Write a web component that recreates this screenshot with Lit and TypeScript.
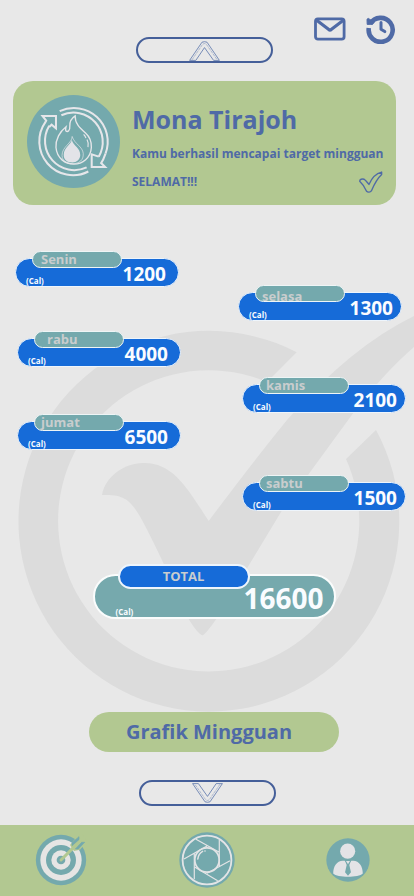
import { LitElement, html, css, svg } from "lit";
import { customElement, property } from "lit/decorators.js";
import { classMap } from "lit/directives/class-map.js";

interface Day {
  name: string;
  calories: number;
  label?: "low" | "mid" | "wide";
}

const LEFT: Day[] = [
  { name: "Senin", calories: 1200, label: "mid" },
  { name: "rabu", calories: 4000, label: "wide" },
  { name: "jumat", calories: 6500 },
];

const RIGHT: Day[] = [
  { name: "selasa", calories: 1300, label: "low" },
  { name: "kamis", calories: 2100 },
  { name: "sabtu", calories: 1500 },
];

@customElement("day-card")
export class DayCard extends LitElement {
  @property({ attribute: false }) day!: Day;

  static styles = css`
    :host {
      display: flex;
      flex-direction: column;
      width: 164px;
      color: #fafcff;
    }
    .tab {
      box-sizing: border-box;
      position: relative;
      z-index: 1;
      width: 90px;
      height: 17px;
      margin: 0 0 -10px 17px;
      padding: 0 6px;
      border: 1px solid #eef5f6;
      border-radius: 9px;
      background: #74a9ad;
      color: #c9cdce;
      font-size: 13px;
      font-weight: 700;
      line-height: 15px;
    }
    .mid {
      padding-left: 8px;
    }
    .wide {
      padding-left: 12px;
    }
    .low {
      line-height: 20px;
    }
    .body {
      box-sizing: border-box;
      display: flex;
      justify-content: space-between;
      align-items: flex-end;
      height: 29px;
      padding: 0 var(--value-inset, 12px) 0 10px;
      border: 1px solid #eef5fc;
      border-radius: 15px;
      background: #166bd8;
    }
    .unit {
      font-size: 8px;
      font-weight: 700;
      line-height: 11px;
    }
    .value {
      font-size: 19px;
      font-weight: 700;
      line-height: 23px;
    }
  `;

  render() {
    const { name, calories, label } = this.day;
    return html`
      <div class=${classMap({ tab: true, [label ?? "plain"]: true })}>${name}</div>
      <div class="body">
        <span class="unit">(Cal)</span>
        <span class="value">${calories}</span>
      </div>
    `;
  }
}

const mailIcon = svg`
  <svg class="mail" viewBox="0 0 32 24" fill="none" stroke="#4f6aa6" stroke-width="2.8" stroke-linejoin="round" stroke-linecap="round" aria-hidden="true">
    <rect x="1.5" y="1.8" width="28.6" height="20.4" rx="2.4"/>
    <path d="M3 3.6 14.8 12.6Q16 13.4 17.2 12.6L29 3.6" stroke-width="3.2"/>
  </svg>`;

const historyIcon = svg`
  <svg class="history" viewBox="0 0 30 30" fill="none" stroke="#4f6aa6" aria-hidden="true">
    <path d="M4.3 9.8A12 12 0 1 1 2.8 14" stroke-width="4.6"/>
    <path d="M1 5.2 2.4 4.4 8.2 8.4 6.4 10.2 1.2 10.4Z" fill="#4f6aa6" stroke-width="1"/>
    <path d="M15 8.6V15.2L18.8 17.6" stroke-width="3" stroke-linecap="round" stroke-linejoin="round"/>
  </svg>`;

const chevron = svg`
  <svg class="chevron" viewBox="0 0 31 20" fill="none" stroke="#5b75ab" aria-hidden="true">
    <path d="M.6 19.4 13 1.2Q15.5 .2 18 1.2L30.4 19.4H24.6L15.5 6.6 6.8 19.4Z" stroke-width=".8"/>
    <path d="M3 18.8 13.6 3.4Q15.5 1.6 17.4 3.4L28.2 18.8" stroke-width=".6" stroke-dasharray="3 .8" opacity=".7"/>
  </svg>`;

const flameIcon = svg`
  <svg class="flame" viewBox="51 57 276 276" fill="none" stroke="#e6e6ea" stroke-linejoin="miter" aria-hidden="true">
    <circle cx="189" cy="195" r="138" fill="#74a9ad" stroke="none"/>
    <path d="M148 105A100 100 0 0 1 284 231" stroke-width="6"/>
    <path d="M153 117A87 87 0 0 1 264 240" stroke-width="6"/>
    <path d="M264 240 243 233V271H283L271 259Q278 249 284 231" stroke-width="6"/>
    <path d="M233 284A100 100 0 0 1 106 137" stroke-width="6"/>
    <path d="M228 272A87 87 0 0 1 117 148" stroke-width="6"/>
    <path d="M106 137 108 133 97 119H137V156L124 145 117 152" stroke-width="6"/>
    <path d="M194 119C186 124 177 135 178 150C179 162 172 169 166 163C165 158 166 155 167 151C149 165 135 189 137 213C140 245 164 262 190 262C216 262 240 244 242 213C243 198 236 180 224 169C208 155 193 142 194 119Z" stroke-width="4"/>
    <path d="M185 180C185 200 155 210 155 236C155 252 168 261 186 261C206 261 219 250 218 231C216 209 192 203 185 180Z" stroke-width="2"/>
    <path d="M184 190C183 203 160 213 160 235C160 250 170 257 186 257C198 257 208 250 209 236C210 214 188 209 184 190Z" fill="#e3e3e8" stroke="none"/>
    <path d="M219 174Q224 179 226 185M229 189Q235 200 232 212" stroke-width="3.4"/>
  </svg>`;

const tickIcon = svg`
  <svg class="tick" viewBox="704 291 70 64" fill="none" stroke="#4f6aa6" stroke-width="4" stroke-linejoin="round" aria-hidden="true">
    <path d="M706 321C706 315 713 313 719 315C725 319 728 324 733 330C739 316 750 299 770 294V301C758 312 749 328 740 349C737 353 730 354 726 350C722 341 716 330 706 321Z"/>
  </svg>`;

const watermark = svg`
  <svg class="watermark" viewBox="0 0 414 420" fill="#dcdcdc" aria-hidden="true">
    <path d="M296.7 52.3A190.4 190.4 0 1 0 376 130L346 159A150.6 150.6 0 1 1 267 82Z"/>
    <path d="M102 195C105 177 124 163 143 163C173 162 188 189 208.7 221Q252 163 287 120Q350 47 414 16V47Q385 72 354 112L281 212L249 265L217 318C208 331 204 335 202.7 335.3C199 335 193 326 188 318C178 295 163 260 143 222C129 195 120 195 102 195Z"/>
  </svg>`;

const targetIcon = svg`
  <svg class="target" viewBox="105 61 156 156" aria-hidden="true">
    <circle cx="183" cy="139" r="75.5" fill="#74a9ad"/>
    <circle cx="183" cy="139" r="62" fill="#e6e5e4"/>
    <circle cx="183" cy="139" r="45" fill="#74a9ad"/>
    <circle cx="183" cy="139" r="29" fill="#e6e5e4"/>
    <circle cx="183" cy="139" r="13" fill="#74a9ad"/>
    <path d="M210 94 230 70 244 60 262 82 240 108 222 112Z" fill="#b2c891"/>
    <path d="M183 139 236 86" stroke="#b2c891" stroke-width="9" stroke-linecap="round"/>
    <path d="M216 96V87L237 69V78ZM226 106H235L254 86H245Z" fill="#74a9ad" stroke="#74a9ad" stroke-width="2"/>
    <path d="M222 99 244 77" stroke="#b2c891" stroke-width="5"/>
  </svg>`;

const cameraIcon = svg`
  <svg class="camera" viewBox="0 0 56 56" fill="none" stroke="#e3e4e6" aria-hidden="true">
    <circle cx="28" cy="28" r="27.7" fill="#74a9ad" stroke="none"/>
    <circle cx="28" cy="28" r="24.4" stroke-width="1.8"/>
    <path d="M40.3 8V34M51 28.7 28 41.3M15.3 47.3V20.7M5 27 28 14M17 7.3 40.3 20.3M38.7 48.7 16 35.3" stroke-width="1.2"/>
    <circle cx="28" cy="28" r="12.2" stroke-width="1.7"/>
    <path d="M18.8 27Q19.5 21.5 23.6 19.3" stroke-width="1.5" stroke-linecap="round"/>
    <circle cx="26" cy="19" r=".8" fill="#e3e4e6" stroke="none"/>
  </svg>`;

const personIcon = svg`
  <svg class="person" viewBox="467 53 134 134" aria-hidden="true">
    <circle cx="534" cy="120" r="66" fill="#74a9ad"/>
    <circle cx="533" cy="93" r="23" fill="#e3e3e6"/>
    <path d="M489 161C489 139 500 122 518 122H524L534 132 544 122H550C568 122 579 139 579 161C567 174 501 174 489 161Z" fill="#e3e3e6"/>
    <path d="M524 121H544L538 135 543 157 534 168 525 157 530 135Z" fill="#74a9ad"/>
    <path d="M528 123H540L534 133Z" fill="#e3e3e6"/>
  </svg>`;

@customElement("app-root")
export class AppRoot extends LitElement {
  static styles = css`
    :host {
      display: flex;
      flex-direction: column;
      min-height: 100vh;
      background: #e8e8e8;
      color: #4f6aa6;
      font-family: "Open Sans", "Noto Sans", sans-serif;
      font-weight: 700;
    }
    h1,
    p,
    ul {
      margin: 0;
      padding: 0;
    }
    svg {
      display: block;
    }
    button {
      padding: 0;
      border: 0;
      background: none;
      color: inherit;
      font: inherit;
      cursor: pointer;
    }
    .top {
      display: grid;
      grid-template-columns: 1fr auto 1fr;
      padding: 14px 5px 18px 0;
    }
    .actions {
      grid-column: 3;
      display: flex;
      justify-content: flex-end;
      align-items: center;
      align-self: start;
      gap: 20px;
      padding-right: 13px;
    }
    .mail {
      width: 32px;
      height: 24px;
    }
    .history {
      width: 30px;
      height: 30px;
    }
    .scroll {
      box-sizing: border-box;
      display: flex;
      justify-content: center;
      align-items: flex-end;
      width: 137px;
      height: 26px;
      border: 2px solid #455f99;
      border-radius: 13px;
    }
    .up {
      grid-column: 2;
      grid-row: 1;
      margin-top: 23px;
    }
    .down {
      align-self: center;
      margin: 28px 0 19px;
    }
    .down .chevron {
      transform: rotate(180deg);
      margin-bottom: 1px;
    }
    .chevron {
      width: 31px;
      height: 20px;
    }
    .profile {
      display: flex;
      gap: 12px;
      margin: 0 18px 0 13px;
      padding: 14px 13px 12px 14px;
      border-radius: 20px;
      background: #b2c891;
    }
    .flame {
      flex: none;
      width: 93px;
      height: 93px;
    }
    .message {
      flex: 1;
      display: flex;
      flex-direction: column;
      min-width: 0;
    }
    .name {
      padding-top: 6px;
      font-size: 25px;
      line-height: 36px;
    }
    .line {
      display: flex;
      justify-content: space-between;
      align-items: center;
      font-size: 12px;
      line-height: 16px;
      white-space: nowrap;
    }
    .first {
      padding: 9px 0;
    }
    .tick {
      width: 24px;
      height: 22px;
    }
    .week {
      position: relative;
      flex: 1;
      display: flex;
      flex-direction: column;
      margin-top: 46px;
    }
    .watermark {
      position: absolute;
      top: 49px;
      left: 0;
      width: 100%;
      height: auto;
    }
    .days {
      position: relative;
      display: flex;
      justify-content: space-between;
      padding: 0 8px 0 15px;
    }
    .days ul {
      display: grid;
      list-style: none;
    }
    .left {
      --value-inset: 12px;
      grid-template-rows: 80px 83px 36px;
    }
    .right {
      --value-inset: 8px;
      grid-template-rows: 92px 98px 36px;
      margin-top: 34px;
    }
    .left li:not(:first-child) {
      margin-left: 2px;
    }
    .right li:first-child {
      margin-left: -4px;
    }
    .summary {
      position: relative;
      display: flex;
      flex-direction: column;
      align-items: center;
      padding: 53px 0 0 14px;
    }
    .total {
      width: 243px;
      color: #fafcff;
    }
    .total-tab {
      box-sizing: border-box;
      position: relative;
      z-index: 1;
      width: 132px;
      height: 25px;
      margin: 0 0 -15px 25px;
      border: 2px solid #eef5fc;
      border-radius: 13px;
      background: #166bd8;
      color: #c9cdce;
      font-size: 13px;
      line-height: 21px;
      text-align: center;
    }
    .total-body {
      box-sizing: border-box;
      display: flex;
      justify-content: space-between;
      align-items: flex-end;
      height: 45px;
      padding: 0 10px 0 21px;
      border: 2px solid #fafcfc;
      border-radius: 23px;
      background: #76a9ad;
    }
    .unit {
      font-size: 8px;
      line-height: 11px;
    }
    .sum {
      font-size: 28px;
      line-height: 38px;
    }
    .graph {
      width: 250px;
      height: 40px;
      margin-top: 93px;
      padding-right: 10px;
      border-radius: 20px;
      background: #b2c891;
      font-size: 20px;
      line-height: 28px;
    }
    .nav {
      display: flex;
      justify-content: space-between;
      align-items: center;
      padding: 7px 44px 8px 35px;
      background: #b2c891;
    }
    .target {
      width: 52px;
      height: 52px;
    }
    .camera {
      width: 56px;
      height: 56px;
    }
    .person {
      width: 44px;
      height: 44px;
    }
  `;

  render() {
    const total = [...LEFT, ...RIGHT].reduce((sum, day) => sum + day.calories, 0);
    const column = (days: Day[], side: string) => html`
      <ul class=${side}>
        ${days.map((day) => html`<li><day-card .day=${day}></day-card></li>`)}
      </ul>
    `;
    return html`
      <header class="top">
        <button class="scroll up" aria-label="Ke atas">${chevron}</button>
        <div class="actions">
          <button aria-label="Pesan">${mailIcon}</button>
          <button aria-label="Riwayat">${historyIcon}</button>
        </div>
      </header>
      <section class="profile">
        ${flameIcon}
        <div class="message">
          <h1 class="name">Mona Tirajoh</h1>
          <p class="line first">Kamu berhasil mencapai target mingguan</p>
          <p class="line"><span>SELAMAT!!!</span>${tickIcon}</p>
        </div>
      </section>
      <main class="week">
        ${watermark}
        <div class="days">${column(LEFT, "left")}${column(RIGHT, "right")}</div>
        <div class="summary">
          <div class="total">
            <div class="total-tab">TOTAL</div>
            <div class="total-body">
              <span class="unit">(Cal)</span>
              <span class="sum">${total}</span>
            </div>
          </div>
          <button class="graph">Grafik Mingguan</button>
        </div>
        <button class="scroll down" aria-label="Ke bawah">${chevron}</button>
      </main>
      <nav class="nav">
        <button aria-label="Target">${targetIcon}</button>
        <button aria-label="Kamera">${cameraIcon}</button>
        <button aria-label="Profil">${personIcon}</button>
      </nav>
    `;
  }
}
